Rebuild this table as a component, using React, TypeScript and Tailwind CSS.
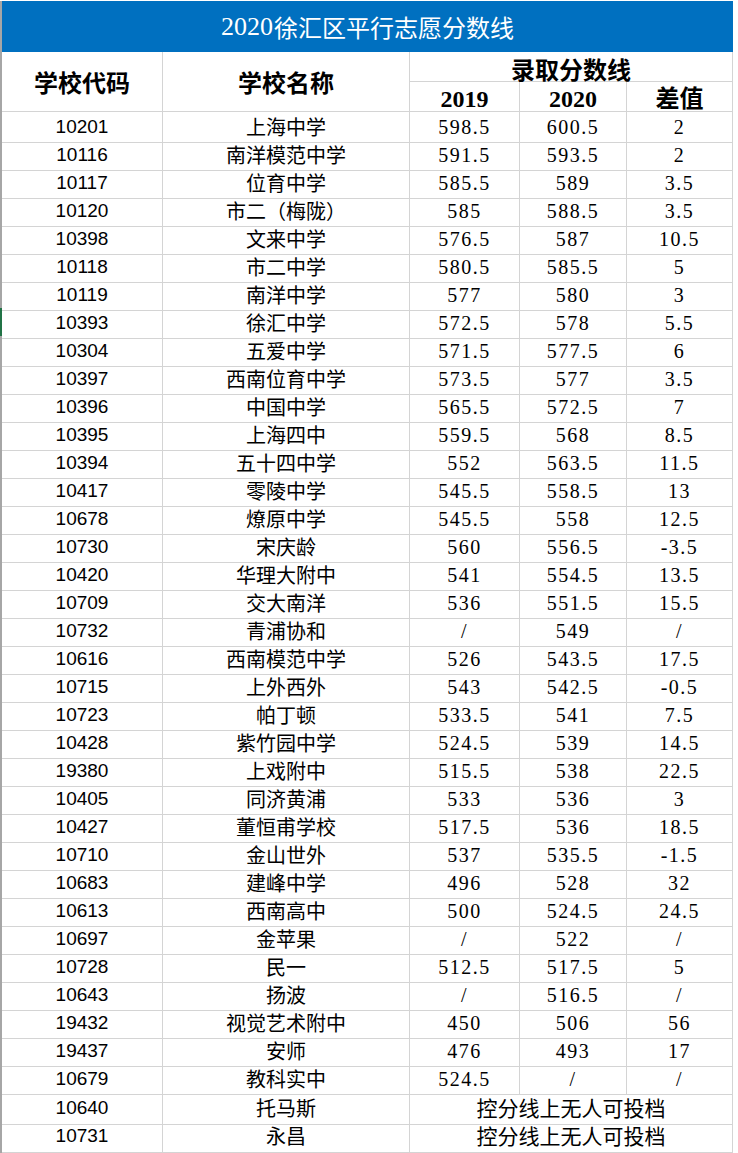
import React from "react";

type Row = [string, string, string, string, string] | [string, string, string];

const ROWS: Row[] = [
  ["10201", "上海中学", "598.5", "600.5", "2"],
  ["10116", "南洋模范中学", "591.5", "593.5", "2"],
  ["10117", "位育中学", "585.5", "589", "3.5"],
  ["10120", "市二（梅陇）", "585", "588.5", "3.5"],
  ["10398", "文来中学", "576.5", "587", "10.5"],
  ["10118", "市二中学", "580.5", "585.5", "5"],
  ["10119", "南洋中学", "577", "580", "3"],
  ["10393", "徐汇中学", "572.5", "578", "5.5"],
  ["10304", "五爱中学", "571.5", "577.5", "6"],
  ["10397", "西南位育中学", "573.5", "577", "3.5"],
  ["10396", "中国中学", "565.5", "572.5", "7"],
  ["10395", "上海四中", "559.5", "568", "8.5"],
  ["10394", "五十四中学", "552", "563.5", "11.5"],
  ["10417", "零陵中学", "545.5", "558.5", "13"],
  ["10678", "燎原中学", "545.5", "558", "12.5"],
  ["10730", "宋庆龄", "560", "556.5", "-3.5"],
  ["10420", "华理大附中", "541", "554.5", "13.5"],
  ["10709", "交大南洋", "536", "551.5", "15.5"],
  ["10732", "青浦协和", "/", "549", "/"],
  ["10616", "西南模范中学", "526", "543.5", "17.5"],
  ["10715", "上外西外", "543", "542.5", "-0.5"],
  ["10723", "帕丁顿", "533.5", "541", "7.5"],
  ["10428", "紫竹园中学", "524.5", "539", "14.5"],
  ["19380", "上戏附中", "515.5", "538", "22.5"],
  ["10405", "同济黄浦", "533", "536", "3"],
  ["10427", "董恒甫学校", "517.5", "536", "18.5"],
  ["10710", "金山世外", "537", "535.5", "-1.5"],
  ["10683", "建峰中学", "496", "528", "32"],
  ["10613", "西南高中", "500", "524.5", "24.5"],
  ["10697", "金苹果", "/", "522", "/"],
  ["10728", "民一", "512.5", "517.5", "5"],
  ["10643", "扬波", "/", "516.5", "/"],
  ["19432", "视觉艺术附中", "450", "506", "56"],
  ["19437", "安师", "476", "493", "17"],
  ["10679", "教科实中", "524.5", "/", "/"],
  ["10640", "托马斯", "控分线上无人可投档"],
  ["10731", "永昌", "控分线上无人可投档"],
];

const cjk = "font-['Noto_Sans_CJK_SC',sans-serif]";
const num = "font-['Liberation_Serif','Noto_Sans_CJK_SC',serif] tracking-[1.5px]";
const cell = "flex items-center justify-center border-r border-b border-[#d4d4d4] text-black";

export default function App() {
  return (
    <div className="w-[738px] h-[1153px] bg-white overflow-hidden pt-px">
      {/* title band */}
      <div className="flex">
        <div className="w-[2px] bg-[#a6a6a6]" />
        <div className={`h-[51px] w-[731px] bg-[#0070c0] flex items-center justify-center text-white text-[24px] ${cjk}`}>
          <span className="font-['Liberation_Serif',serif] text-[26px] mr-px">2020</span>徐汇区平行志愿分数线
        </div>
      </div>

      {/* header */}
      <div className="grid grid-cols-[2px_161px_247px_110px_107px_106px] grid-rows-[30px_30px]">
        <div className="row-span-2 bg-[#a6a6a6]" />
        <div className={`${cell} row-span-2 text-[24px] font-bold ${cjk}`}>学校代码</div>
        <div className={`${cell} row-span-2 text-[24px] font-bold ${cjk}`}>学校名称</div>
        <div className={`${cell} col-span-3 text-[24px] font-bold ${cjk} pt-1`}>录取分数线</div>
        <div className={`${cell} text-[24px] font-bold font-['Liberation_Serif',serif] pt-1`}>2019</div>
        <div className={`${cell} text-[24px] font-bold font-['Liberation_Serif',serif] pt-1`}>2020</div>
        <div className={`${cell} text-[24px] font-bold ${cjk}`}>差值</div>
      </div>

      {/* data rows */}
      {ROWS.map((r, i) => (
        <div key={r[0]} className="grid grid-cols-[2px_161px_247px_110px_107px_106px] h-[28px]">
          <div className={i === 7 ? "bg-[#217346]" : "bg-[#a6a6a6]"} />
          <div className={`${cell} text-[19px] font-['Liberation_Sans',sans-serif]`}>{r[0]}</div>
          <div className={`${cell} text-[20px] ${cjk}`}>{r[1]}</div>
          {r.length === 3 ? (
            <div className={`${cell} col-span-3 text-[21px] ${cjk}`}>{r[2]}</div>
          ) : (
            <>
              <div className={`${cell} text-[20px] ${num}`}>{r[2]}</div>
              <div className={`${cell} text-[20px] ${num}`}>{r[3]}</div>
              <div className={`${cell} text-[20px] ${num}`}>{r[4]}</div>
            </>
          )}
        </div>
      ))}
    </div>
  );
}
